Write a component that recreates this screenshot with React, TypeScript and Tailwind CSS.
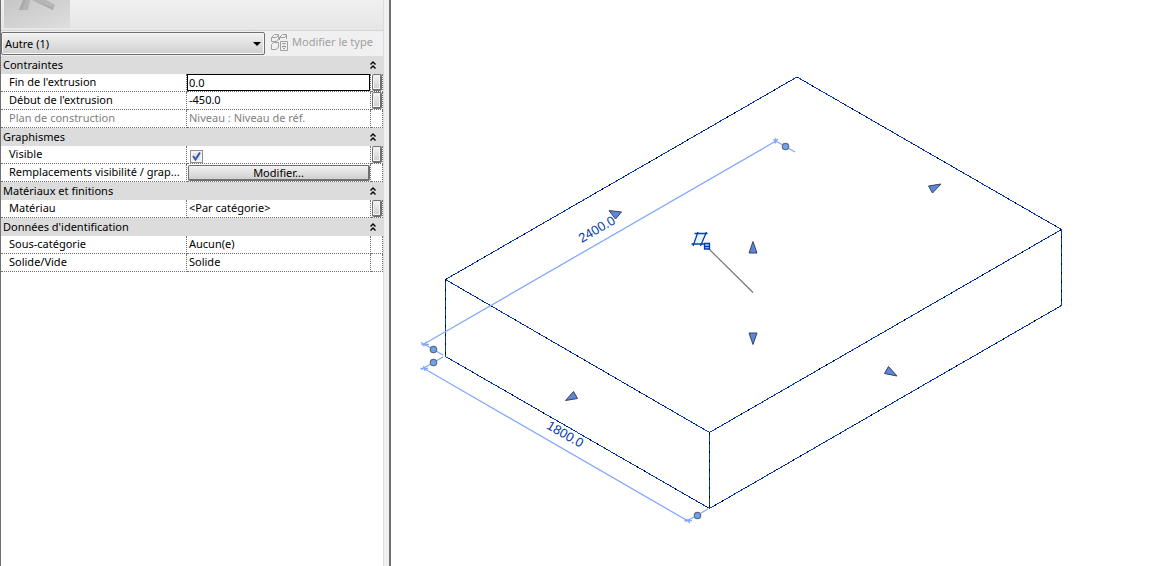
import { useState } from "react";
import type { ReactNode } from "react";

const cell = "h-[18px] border-b border-r border-dotted border-[#707070] p-0 align-top";

function DoubleChevron() {
  return (
    <svg width="7" height="8" viewBox="0 0 7 8" fill="none" stroke="#000" strokeWidth="1.400" aria-hidden="true">
      <path d="M.5 3.500 3 1l2.500 2.500M.5 7.500 3 5l2.500 2.500" />
    </svg>
  );
}

function Section({ title, children }: { title: string; children: ReactNode }) {
  const [open, setOpen] = useState(true);
  return (
    <tbody>
      <tr className="bg-[#dcdcdc]">
        <th colSpan={3} className="h-[18px] p-0 font-normal">
          <button
            type="button"
            aria-expanded={open}
            onClick={() => setOpen(!open)}
            className="flex h-[18px] w-full items-center justify-between pl-0.5 pr-1.5 text-left"
          >
            {title}
            <DoubleChevron />
          </button>
        </th>
      </tr>
      {open && children}
    </tbody>
  );
}

function Row({ label, id, children, link, muted }: { label: string; id?: string; children: ReactNode; link?: boolean; muted?: boolean }) {
  return (
    <tr className={muted ? "text-[#808080]" : ""}>
      <th className={`${cell} font-normal text-left`}>
        <label htmlFor={id} className="block whitespace-nowrap pl-2 leading-4">{label}</label>
      </th>
      <td className={cell}>{children}</td>
      <td className={cell}>
        {link && (
          <button
            type="button"
            aria-label={`Associer : ${label}`}
            className="ml-px block h-[17px] w-2.5 rounded-xs border border-b-2 border-r-2 border-[#707070] bg-linear-to-b from-[#f4f4f4] to-[#cfcfcf] inset-ring inset-ring-[#f4f4f4]"
          />
        )}
      </td>
    </tr>
  );
}

function Grips() {
  const dots = [[785, 146], [433, 349], [433, 362], [697, 515]];
  const arrows = [
    "M609 210.5 621.500 212 615.500 219Z",
    "M941 184 932.500 193 928.500 186Z",
    "M753 241.500 757 253H749Z",
    "M753 344.500 749 333H757Z",
    "M565.500 400.500 573.500 391.500 577.500 398.500Z",
    "M897 376 888.500 366.500 884.500 373.500Z",
  ];
  return (
    <>
      <g fill="#6ba3f5" stroke="#626b7a" strokeWidth="1.200">
        {dots.map(([x, y]) => <circle key={`${x}-${y}`} cx={x + 0.5} cy={y + 0.5} r="3.200" />)}
      </g>
      <g fill="#5b86dd" stroke="#3c4258" strokeWidth="1">
        {arrows.map((d) => <path key={d} d={d} />)}
      </g>
    </>
  );
}

function Viewport() {
  const box =
    "M445.500 279.500 797 77 1061.500 229.500 709.500 432.500ZM445.500 279.500V356.500L709.500 508.500 1061.500 305.500V229.500M709.500 432.500V508.500";
  return (
    <svg
      role="img"
      aria-label="Vue 3D de l'extrusion"
      viewBox="391 0 759 566"
      preserveAspectRatio="xMinYMin meet"
      className="block h-full w-full"
      fill="none"
    >
      <g shapeRendering="crispEdges">
        <path d={box} stroke="#003cc4" />
        <path d={box} stroke="#000" strokeDasharray="2 7" />
      </g>
      <g stroke="#84a8ff" strokeWidth="1.300">
        <path d="M424 344 776 141M424 368.500 688 521" />
        <path d="M421 342.500 431 348M436 351 443 355M421 369.500 431 364M436 361 443 357M773 139.500 782 144.500M788 148 795 152M685 521.500 694 517M701 513 708 509" />
        <path d="M423.500 346.500 426.500 341.500M421.500 344.500H429M423.500 366 425 371M420.500 368.500H428M774 142.500 778 139M775.500 138V143.500M686 519 690 523M684.500 520.500H692" />
      </g>
      <path d="M708.500 248.500 753 292.500" stroke="#777" strokeWidth="1.200" />
      <path d="M698 234H706L701.500 244H694Z" fill="#e6f6fb" />
      <g stroke="#0038b8" strokeWidth="1.300">
        <path d="M694.500 233.500H707.500M691.500 244H704.500" stroke="#004a9c" />
        <path d="M698 232 693 246M706.500 232 700.500 246" />
        <path d="M704.500 243.500H709.500V249H704.500ZM704.500 246.500H709.500" fill="#a8e0f0" />
      </g>
      <g fill="#0038a8" className="font-['Liberation_Sans',sans-serif] text-[13px]" textAnchor="middle">
        <text transform="translate(599 233) rotate(-30)">2400.0</text>
        <text transform="translate(563 438) rotate(30)">1800.0</text>
      </g>
      <Grips />
    </svg>
  );
}

export default function App() {
  const [end, setEnd] = useState("0.0");
  const [visible, setVisible] = useState(true);
  return (
    <div className="flex h-screen bg-white font-['Noto_Sans',sans-serif] text-[11px] leading-4 text-black">
      <aside aria-label="Propriétés" className="flex w-[391px] shrink-0 border-r-2 border-[#707070] bg-[#f0f0f0]">
        <div className="flex min-w-0 grow flex-col border-l border-r border-l-[#707070] border-r-[#dcdcdc]">
          <div className="h-[31px] border-b border-[#d4d4d4] bg-linear-to-b from-[#f0f0f0] to-[#e6e6e6] pl-[3px]">
            <svg width="66" height="28" viewBox="0 0 66 28" aria-hidden="true">
              <defs>
                <linearGradient id="thumb" x1="0" y1="0" x2="1" y2="1">
                  <stop offset="0" stopColor="#c6c6c6" />
                  <stop offset="1" stopColor="#dedede" />
                </linearGradient>
              </defs>
              <path d="M0 0H66V28H0Z" fill="url(#thumb)" />
              <path d="M19 0H26L24 10H15ZM28 0H42L51 5 49 10Z" fill="#b5b5b5" />
              <path d="M19 0H22L18 10H15ZM28 0 49 8V10Z" fill="#aaa" />
            </svg>
          </div>
          <div className="flex h-[25px] items-center">
            <div className="relative w-[264px]">
              <select
                aria-label="Famille"
                className="block h-[23px] w-full appearance-none rounded-xs border border-[#707070] bg-linear-to-b from-[#f2f2f2] to-[#cfcfcf] pl-[3px] pr-5 inset-ring inset-ring-[#f8f8f8]"
              >
                <option>Autre (1)</option>
              </select>
              <svg width="8" height="4" viewBox="0 0 8 4" className="pointer-events-none absolute right-1 top-[10px]" aria-hidden="true">
                <path d="M0 0H8L4 4Z" />
              </svg>
            </div>
            <button type="button" disabled className="flex h-[22px] grow items-center gap-1 whitespace-nowrap pb-[3px] pl-1.5 text-[#a0a0a0]">
              <svg width="17" height="17" viewBox="0 0 17 17" fill="none" stroke="#a0a0a0" aria-hidden="true">
                <path d="M.5 7.500V3.500L3.500.5H7.500V5L5.500 7.500ZM.5 3.500H5.500L7.500 1M8.500 6V3.500L11.500.5H15.500V5M8.500 3.500H13.500L15.500 1M.5 15.500V10.500L2.500 8.500H7.500V13L5.500 15.500ZM9.500 7.500H16.500V16.500H9.500ZM11 9.500H15M11 12.500H15M13 11V13" />
                <path d="m11.500 13.500 1.500 1.500 1.500-1.500" />
              </svg>
              Modifier le type
            </button>
          </div>
          <div className="min-h-0 grow bg-white">
            <table className="w-full table-fixed border-separate border-spacing-0 text-left">
              <colgroup>
                <col className="w-[186px]" />
                <col />
                <col className="w-3" />
              </colgroup>
              <Section title="Contraintes">
                <Row label="Fin de l'extrusion" id="end" link>
                  <input
                    id="end"
                    value={end}
                    onChange={(e) => setEnd(e.target.value)}
                    className="block h-[17px] w-full border border-black bg-white pl-px outline-none"
                  />
                </Row>
                <Row label="Début de l'extrusion" id="start" link>
                  <input id="start" defaultValue="-450.0" className="block h-4 w-full pl-0.5 outline-none" />
                </Row>
                <Row label="Plan de construction" muted>
                  <span className="block pl-0.5">Niveau : Niveau de réf.</span>
                </Row>
              </Section>
              <Section title="Graphismes">
                <Row label="Visible" id="visible" link>
                  <span className="grid h-[17px] w-[19px] place-items-center pt-[3px]">
                    <input
                      id="visible"
                      type="checkbox"
                      checked={visible}
                      onChange={(e) => setVisible(e.target.checked)}
                      className="col-start-1 row-start-1 size-[13px] appearance-none border border-[#8e8f8f] bg-[#e0e5ec] inset-ring-2 inset-ring-[#f4f4f4]"
                    />
                    {visible && (
                      <svg width="9" height="9" viewBox="0 0 9 9" fill="none" stroke="#3b56a0" strokeWidth="2" className="pointer-events-none col-start-1 row-start-1" aria-hidden="true">
                        <path d="m1 4 2.500 3.500L8 .5" />
                      </svg>
                    )}
                  </span>
                </Row>
                <Row label="Remplacements visibilité / grap..." id="overrides">
                  <div className="pl-px pt-px">
                    <button
                      id="overrides"
                      type="button"
                      className="flex h-4 w-full items-center justify-center rounded-xs border border-b-2 border-r-2 border-[#707070] bg-linear-to-b from-[#f3f3f3] to-[#cfcfcf]"
                    >
                      Modifier...
                    </button>
                  </div>
                </Row>
              </Section>
              <Section title="Matériaux et finitions">
                <Row label="Matériau" link>
                  <span className="block pl-0.5">&lt;Par catégorie&gt;</span>
                </Row>
              </Section>
              <Section title="Données d'identification">
                <Row label="Sous-catégorie">
                  <span className="block pl-0.5">Aucun(e)</span>
                </Row>
                <Row label="Solide/Vide">
                  <span className="block pl-0.5">Solide</span>
                </Row>
              </Section>
            </table>
          </div>
        </div>
        <div className="w-[5px] shrink-0" />
      </aside>
      <main className="min-w-0 grow">
        <Viewport />
      </main>
    </div>
  );
}
